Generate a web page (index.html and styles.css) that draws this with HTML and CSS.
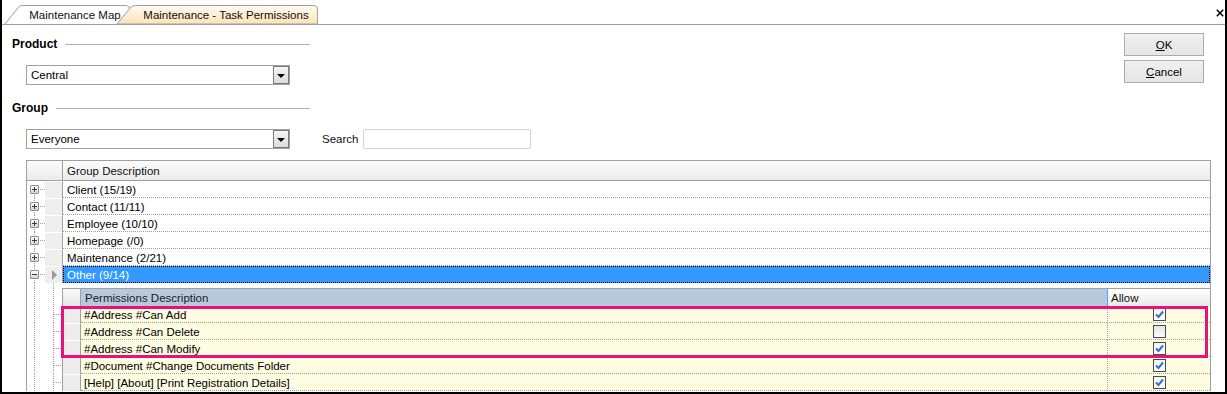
FILE: index.html
```html
<!DOCTYPE html>
<html lang="en">
<head>
  <meta charset="UTF-8">
  <title>Maintenance - Task Permissions</title>
  <link rel="stylesheet" href="styles.css">
</head>
<body>
  <div class="window">
    <div class="tabstrip">
      <svg class="tab-shapes" width="330" height="26" viewBox="0 0 330 26">
        <defs>
          <linearGradient id="activeTab" x1="0" y1="0" x2="0" y2="1">
            <stop offset="0" stop-color="#fffaf2"/>
            <stop offset="1" stop-color="#fde3b6"/>
          </linearGradient>
        </defs>
        <path d="M5 25 L18.5 8 Q20 6.5 23 6.5 L126 6.5 Q129.5 6.5 129.5 10 L129.5 25" fill="#fff" stroke="#a0a0a0"/>
        <path d="M117 25 L131 8 Q132.5 6.5 135.5 6.5 L314 6.5 Q317.5 6.5 317.5 10 L317.5 25 Z" fill="url(#activeTab)" stroke="#a0a0a0"/>
      </svg>
      <span class="tab-label tab-map">Maintenance Map</span>
      <span class="tab-label tab-perm">Maintenance - Task Permissions</span>
      <svg class="close" width="8" height="8" viewBox="0 0 8 8">
        <path d="M0.8 0.8 L7.2 7.2 M7.2 0.8 L0.8 7.2" stroke="#000" stroke-width="1.5"/>
      </svg>
    </div>

    <div class="form">
      <div class="form-left">
        <div class="section-head"><span>Product</span><span class="rule"></span></div>
        <div class="combo">
          <span class="combo-text">Central</span>
          <span class="combo-btn"><span class="arrow"></span></span>
        </div>

        <div class="section-head group-head"><span>Group</span><span class="rule"></span></div>
        <div class="combo-row">
          <div class="combo">
            <span class="combo-text">Everyone</span>
            <span class="combo-btn"><span class="arrow"></span></span>
          </div>
          <label class="search-label">Search</label>
          <input class="search-input" type="text">
        </div>
      </div>

      <div class="form-buttons">
        <button class="btn"><u>O</u>K</button>
        <button class="btn"><u>C</u>ancel</button>
      </div>
    </div>

    <div class="grid">
      <div class="grid-head">
        <div class="gh-corner"></div>
        <div class="gh-cell">Group Description</div>
      </div>

      <div class="row">
        <div class="tree first"><span class="exp"><svg width="7" height="7" viewBox="0 0 7 7"><path d="M1 3.5h5M3.5 1v5" stroke="#3c3c3c"/></svg></span><span class="stub"></span></div>
        <div class="ind"></div>
        <div class="cell">Client (15/19)</div>
      </div>
      <div class="row">
        <div class="tree"><span class="exp"><svg width="7" height="7" viewBox="0 0 7 7"><path d="M1 3.5h5M3.5 1v5" stroke="#3c3c3c"/></svg></span><span class="stub"></span></div>
        <div class="ind"></div>
        <div class="cell">Contact (11/11)</div>
      </div>
      <div class="row">
        <div class="tree"><span class="exp"><svg width="7" height="7" viewBox="0 0 7 7"><path d="M1 3.5h5M3.5 1v5" stroke="#3c3c3c"/></svg></span><span class="stub"></span></div>
        <div class="ind"></div>
        <div class="cell">Employee (10/10)</div>
      </div>
      <div class="row">
        <div class="tree"><span class="exp"><svg width="7" height="7" viewBox="0 0 7 7"><path d="M1 3.5h5M3.5 1v5" stroke="#3c3c3c"/></svg></span><span class="stub"></span></div>
        <div class="ind"></div>
        <div class="cell">Homepage (/0)</div>
      </div>
      <div class="row">
        <div class="tree"><span class="exp"><svg width="7" height="7" viewBox="0 0 7 7"><path d="M1 3.5h5M3.5 1v5" stroke="#3c3c3c"/></svg></span><span class="stub"></span></div>
        <div class="ind"></div>
        <div class="cell">Maintenance (2/21)</div>
      </div>
      <div class="row">
        <div class="tree"><span class="exp"><svg width="7" height="7" viewBox="0 0 7 7"><path d="M1 3.5h5" stroke="#3c3c3c"/></svg></span><span class="stub"></span></div>
        <div class="ind"><span class="current"></span></div>
        <div class="cell selected">Other (9/14)</div>
      </div>

      <div class="band">
        <div class="crow gap">
          <div class="ctree"></div>
        </div>
        <div class="crow chead">
          <div class="ctree"></div>
          <div class="ch-corner"></div>
          <div class="ch-desc">Permissions Description</div>
          <div class="ch-allow">Allow</div>
        </div>

        <div class="hl">
          <div class="crow">
            <div class="ctree stubbed"></div>
            <div class="crh"></div>
            <div class="cdesc">#Address #Can Add</div>
            <div class="callow"><span class="check on"></span></div>
          </div>
          <div class="crow">
            <div class="ctree stubbed"></div>
            <div class="crh"></div>
            <div class="cdesc">#Address #Can Delete</div>
            <div class="callow"><span class="check"></span></div>
          </div>
          <div class="crow">
            <div class="ctree stubbed"></div>
            <div class="crh"></div>
            <div class="cdesc">#Address #Can Modify</div>
            <div class="callow"><span class="check on"></span></div>
          </div>
        </div>
        <div class="crow">
          <div class="ctree stubbed"></div>
          <div class="crh"></div>
          <div class="cdesc">#Document #Change Documents Folder</div>
          <div class="callow"><span class="check on"></span></div>
        </div>
        <div class="crow">
          <div class="ctree stubbed"></div>
          <div class="crh"></div>
          <div class="cdesc">[Help] [About] [Print Registration Details]</div>
          <div class="callow"><span class="check on"></span></div>
        </div>
      </div>
    </div>
  </div>
</body>
</html>
```

FILE: styles.css
```css
* {
  box-sizing: border-box;
}

html,
body {
  margin: 0;
}

body {
  width: 1227px;
  height: 394px;
  overflow: hidden;
  background: #ffffff;
  font-family: "Liberation Sans", Arial, sans-serif;
  font-size: 11.5px;
  color: #000;
}

.window {
  height: 394px;
  border-left: 2px solid #000;
  border-right: 2px solid #000;
  border-bottom: 2px solid #000;
  overflow: hidden;
}

/* tabs */

.tabstrip {
  position: relative;
  height: 25px;
  border-bottom: 1px solid #a0a0a0;
  display: flex;
}

.tab-shapes {
  position: absolute;
  left: -2px;
  top: -1px;
}

.tab-label {
  position: relative;
  height: 24px;
  padding-top: 7px;
  line-height: 16px;
  text-align: center;
  white-space: nowrap;
  color: #111;
}

.tab-map {
  margin-left: 20px;
  width: 106px;
}

.tab-perm {
  margin-left: 7px;
  width: 182px;
}

.close {
  margin: 9px 1px 0 auto;
}

/* form */

.form {
  display: flex;
}

.form-left {
  width: 308px;
  padding-left: 10px;
}

.section-head {
  display: flex;
  align-items: center;
  height: 18px;
  margin-top: 10px;
  font-size: 12px;
  font-weight: bold;
}

.group-head {
  margin-top: 14px;
}

.rule {
  flex: 1;
  margin-left: 8px;
  border-top: 1px solid #a8b6c8;
}

.combo {
  flex: none;
  display: flex;
  width: 264px;
  height: 20px;
  margin: 12px 0 0 14px;
  border: 1px solid #a2a2a2;
  background: #fff;
}

.combo-row .combo {
  margin-top: 0;
}

.combo-text {
  flex: 1;
  padding: 1px 0 0 4px;
  line-height: 17px;
}

.combo-btn {
  width: 16px;
  height: 18px;
  border: 1px solid #7a7a7a;
  background: linear-gradient(#f4f4f4, #dcdcdc);
  display: flex;
  align-items: center;
  justify-content: center;
}

.arrow {
  width: 0;
  height: 0;
  border-left: 4px solid transparent;
  border-right: 4px solid transparent;
  border-top: 4px solid #000;
  margin-top: 1px;
}

.combo-row {
  display: flex;
  align-items: center;
  margin-top: 12px;
}

.search-label {
  flex: none;
  width: 41px;
  margin-left: 32px;
  color: #111;
}

.search-input {
  flex: none;
  width: 168px;
  height: 20px;
  margin: 0;
  border: 1px solid #cfd3d9;
  border-radius: 2px;
  background: #fff;
}

.form-buttons {
  margin-left: auto;
  margin-right: 21px;
  padding-top: 8px;
  display: flex;
  flex-direction: column;
  gap: 4px;
}

.btn {
  width: 80px;
  height: 23px;
  padding: 0;
  border: 1px solid #acacac;
  background: linear-gradient(#f0f0f0, #e5e5e5);
  font-family: "Liberation Sans", Arial, sans-serif;
  font-size: 11.5px;
  color: #000;
}

/* grid */

.grid {
  width: 1185px;
  margin: 11px 0 0 24px;
  border-left: 1px solid #a0a0a0;
  border-top: 1px solid #a0a0a0;
  border-right: 1px solid #a0a0a0;
}

.grid-head {
  display: flex;
  height: 20px;
  border-bottom: 1px solid #a0a0a0;
  background: linear-gradient(#fcfcfc, #ebebeb);
}

.gh-corner {
  width: 36px;
  border-right: 1px solid #a0a0a0;
}

.gh-cell {
  flex: 1;
  padding: 1px 0 0 4px;
  line-height: 18px;
  color: #111;
}

.row {
  display: flex;
  height: 17px;
}

.tree {
  width: 18px;
  padding-left: 3px;
  display: flex;
  align-items: center;
  background: repeating-linear-gradient(to bottom, #a0a0a0 0 1px, transparent 1px 2px) no-repeat 7px 0 / 1px 100%;
}

.tree.first {
  background-position: 7px 8px;
}

.exp {
  width: 9px;
  height: 9px;
  border: 1px solid #8e8e8e;
  border-radius: 1px;
  background: linear-gradient(#fdfdfd, #d6d6d6);
  display: flex;
}

.stub {
  flex: 1;
  height: 1px;
  margin-left: 1px;
  background: repeating-linear-gradient(to right, #a0a0a0 0 1px, transparent 1px 2px);
}

.ind {
  width: 18px;
  background: #eeeeee;
  border-top: 1px solid #fff;
  border-right: 1px solid #a0a0a0;
  display: flex;
  align-items: center;
  justify-content: center;
}

.current {
  width: 0;
  height: 0;
  border-top: 5px solid transparent;
  border-bottom: 5px solid transparent;
  border-left: 5px solid #9a9a9a;
  margin-left: 1px;
}

.cell {
  flex: 1;
  padding: 1px 0 0 4px;
  line-height: 16px;
  border-bottom: 1px dotted #a0a0a0;
  white-space: nowrap;
}

.cell.selected {
  background: #3399ff;
  color: #fff;
  border: 1px dotted #000;
  padding: 1px 0 0 3px;
  line-height: 14px;
}

/* child band */

.crow {
  display: flex;
  height: 17px;
}

.crow.gap {
  height: 5px;
}

.crow.chead {
  height: 18px;
}

.ctree {
  width: 35px;
  background:
    repeating-linear-gradient(to bottom, #a0a0a0 0 1px, transparent 1px 2px) no-repeat 7px 0 / 1px 100%,
    repeating-linear-gradient(to bottom, #a0a0a0 0 1px, transparent 1px 2px) no-repeat 26px 0 / 1px 100%;
}

.ctree.stubbed {
  background:
    repeating-linear-gradient(to bottom, #a0a0a0 0 1px, transparent 1px 2px) no-repeat 7px 0 / 1px 100%,
    repeating-linear-gradient(to bottom, #a0a0a0 0 1px, transparent 1px 2px) no-repeat 26px 0 / 1px 100%,
    repeating-linear-gradient(to right, #a0a0a0 0 1px, transparent 1px 2px) no-repeat 27px 8px / 8px 1px;
}

.ch-corner {
  width: 19px;
  border-left: 1px solid #a0a0a0;
  border-top: 1px solid #a0a0a0;
  border-right: 1px solid #a0a0a0;
  background: linear-gradient(#fafafa, #e4e4e4);
}

.ch-desc {
  flex: 1;
  padding: 1px 0 0 4px;
  line-height: 16px;
  border-top: 1px solid #a0a0a0;
  background: #b9c9dc;
  color: #1a1a2a;
}

.ch-allow {
  width: 103px;
  padding: 1px 0 0 3px;
  line-height: 16px;
  border-top: 1px solid #a0a0a0;
  border-left: 1px solid #4ea6ff;
  background: linear-gradient(#fefefe, #e9e9e9);
  color: #111;
}

.crh {
  width: 19px;
  background: #ececec;
  border-top: 1px solid #fff;
  border-left: 1px solid #a0a0a0;
  border-right: 1px solid #a0a0a0;
}

.cdesc {
  flex: 1;
  padding: 1px 0 0 3px;
  line-height: 16px;
  background: #fefde2;
  border-bottom: 1px dotted #a0a0a0;
  white-space: nowrap;
}

.callow {
  width: 103px;
  background: #fefde2;
  border-left: 1px dotted #a0a0a0;
  border-bottom: 1px dotted #a0a0a0;
  display: flex;
  align-items: center;
  justify-content: center;
}

.check {
  width: 13px;
  height: 13px;
  border: 1px solid #4b4b4b;
  background: linear-gradient(#e4e4e4, #fcfcfc);
}

.check.on {
  background:
    url("data:image/svg+xml,%3Csvg xmlns='http://www.w3.org/2000/svg' width='11' height='11'%3E%3Cpath d='M2 5.5 L4.5 8 L9 2.5' fill='none' stroke='%232c72d8' stroke-width='2'/%3E%3C/svg%3E") no-repeat center,
    linear-gradient(#f2f2f2, #ffffff);
}

.hl {
  position: relative;
}

.hl::after {
  content: "";
  position: absolute;
  left: 34px;
  top: 0;
  right: 2px;
  bottom: -1px;
  border: 3px solid #e8127a;
  pointer-events: none;
}
```
